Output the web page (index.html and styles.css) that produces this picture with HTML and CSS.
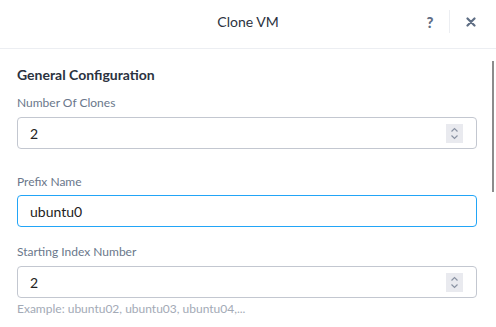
FILE: index.html
```html
<!DOCTYPE html>
<html>
<head>
<meta charset="utf-8">
<link rel="stylesheet" href="styles.css">
</head>
<body>
<div class="dialog">
  <header class="head">
    <div class="title">Clone VM</div>
    <div class="actions">
      <span class="help">?</span>
      <span class="sep"></span>
      <svg class="close" width="10" height="10" viewBox="0 0 10 10"><path d="M1.5 1.5L8.5 8.5M8.5 1.5L1.5 8.5" stroke="#5f6e84" stroke-width="2.2" stroke-linecap="round"/></svg>
    </div>
  </header>
  <main class="body">
    <h2 class="section">General Configuration</h2>
    <div class="field">
      <label class="label">Number Of Clones</label>
      <div class="input">
        <span class="value">2</span>
        <span class="spin"><svg width="9" height="13" viewBox="0 0 9 13"><path d="M1.5 4.5L4.5 1.5L7.5 4.5M1.5 8.5L4.5 11.5L7.5 8.5" fill="none" stroke="#8a93a3" stroke-width="1.2"/></svg></span>
      </div>
    </div>
    <div class="field">
      <label class="label">Prefix Name</label>
      <div class="input focus">
        <span class="value">ubuntu0</span>
      </div>
    </div>
    <div class="field tight">
      <label class="label">Starting Index Number</label>
      <div class="input">
        <span class="value">2</span>
        <span class="spin"><svg width="9" height="13" viewBox="0 0 9 13"><path d="M1.5 4.5L4.5 1.5L7.5 4.5M1.5 8.5L4.5 11.5L7.5 8.5" fill="none" stroke="#8a93a3" stroke-width="1.2"/></svg></span>
      </div>
      <div class="hint">Example: ubuntu02, ubuntu03, ubuntu04,...</div>
    </div>
  </main>
  <div class="scrollbar"></div>
</div>
</body>
</html>
```
FILE: styles.css
```css
* { box-sizing: border-box; }
html, body { margin: 0; padding: 0; background: #fff; }
body { font-family: Lato, "Open Sans", sans-serif; color: #2b3240; }
.dialog { position: relative; width: 496px; height: 327px; overflow: hidden; }
.head {
  height: 49px;
  border-bottom: 1px solid #eceef2;
  display: flex;
  align-items: center;
  justify-content: center;
  position: relative;
  padding-bottom: 5px;
}
.title { font-size: 14px; color: #2b3240; }
.actions {
  position: absolute;
  right: 20px;
  top: 10px;
  height: 23px;
  display: flex;
  align-items: center;
}
.help { font-size: 15px; font-weight: 900; color: #5f6e84; width: 10px; text-align: center; }
.sep { width: 1px; height: 23px; background: #eceef2; margin: 0 16px 0 14px; }
.close { display: block; }
.body { padding: 16px 19px 0 17px; }
.section { margin: 0; font-size: 14px; font-weight: 700; line-height: 20px; color: #2b3240; }
.field { margin-top: 10px; }
.field + .field { margin-top: 25px; }
.field.tight { margin-top: 17px; }
.label { display: block; font-size: 12px; line-height: 16px; color: #6a778b; }
.input {
  margin-top: 6px;
  height: 32px;
  border: 1px solid #c3c7d0;
  border-radius: 4px;
  display: flex;
  align-items: center;
  padding: 0 13px 0 12px;
}
.input.focus { border-color: #22a5f7; margin-top: 5px; }
.value { flex: 1; font-size: 14px; color: #222; }
.spin {
  width: 17px;
  height: 19px;
  background: #e9eaef;
  display: flex;
  align-items: center;
  justify-content: center;
}
.spin svg { display: block; }
.hint { margin-top: 3px; font-size: 12px; line-height: 16px; color: #a3aab6; }
.scrollbar {
  position: absolute;
  left: 492px;
  top: 61px;
  width: 2px;
  height: 131px;
  background: #8c8c8c;
}
```
